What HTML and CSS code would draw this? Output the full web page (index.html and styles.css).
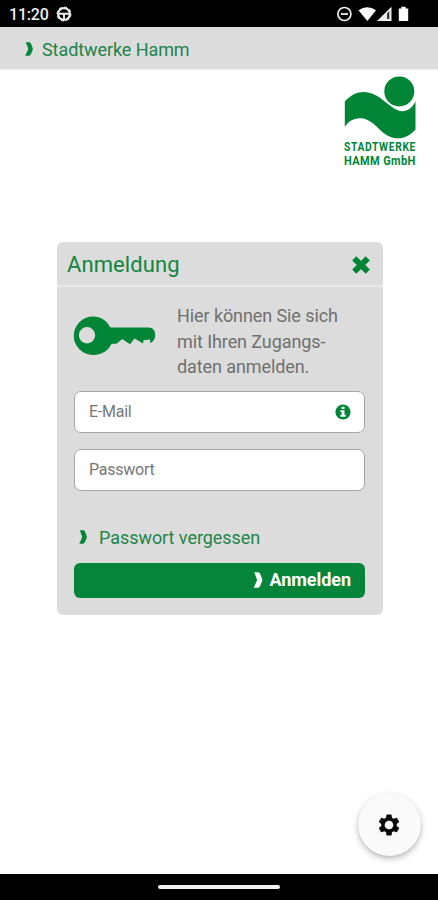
FILE: index.html
```html
<!DOCTYPE html>
<html lang="de">
<head>
<meta charset="utf-8">
<meta name="viewport" content="width=device-width, initial-scale=1">
<title>Stadtwerke Hamm</title>
<link rel="stylesheet" href="styles.css">
</head>
<body>
<svg width="0" height="0" class="defs" aria-hidden="true">
  <symbol id="chevron" viewBox="0 0 8 14"><path d="M.8.2H4Q5.3.2 5.9 1.6L7.6 5.8Q8 7 7.6 8.2L5.9 12.1Q5.2 13.8 3.9 13.8H.2L2.8 8.2Q3.3 7 2.9 5.8Z"/></symbol>
</svg>
<div class="screen">
  <div class="status">
    <span class="clock">11:20</span>
    <svg class="wheel" viewBox="0 0 16 16" fill="none" stroke="#eee">
      <circle cx="8" cy="8" r="5.9" stroke-width="2.2"/>
      <circle cx="8" cy="8" r="7" stroke-width="1" stroke-dasharray="3 2.5"/>
      <path d="M2.5 7.7h11M8 8v5.5" stroke-width="1.9"/>
    </svg>
    <svg class="signals" viewBox="0 0 74 18">
      <circle cx="8.4" cy="9" r="6.5" fill="none" stroke="#eee" stroke-width="1.7"/>
      <path d="M4.8 9h7.2" stroke="#eee" stroke-width="1.8"/>
      <path d="M22.5 5.2Q31 -.8 40 5.2L31.4 16Z" fill="#fff"/>
      <path d="M41 16L55.5 1.7V16Z" fill="#eee"/>
      <path d="M51 8.5l2.3-2.3V14h-2.3Z" fill="#333"/>
      <path d="M62.8 3.4h2.5V1.8h4.4v1.6h2.5V16h-9.4Z" fill="#fff"/>
    </svg>
  </div>
  <header class="bar">
    <svg class="chev"><use href="#chevron"/></svg>
    <span>Stadtwerke Hamm</span>
  </header>
  <main>
    <svg class="logo" viewBox="0 0 74 92">
      <circle cx="56.3" cy="16.4" r="15" />
      <path d="M1.8 26.5C12 14.5 26 14 38 23.5C50 33 54 36.5 60 36.2C66 35.8 70 31.5 72.5 26.5V54.5C66 62 58 65 49 62.5C36 58.5 32 44.5 18 43.3C10 43 5 47 1.8 52Z"/>
      <text transform="translate(1 76.2) scale(.86 1)" textLength="83">STADTWERKE</text>
      <text transform="translate(1 89.6) scale(.92 1)" textLength="77.6">HAMM GmbH</text>
    </svg>
    <section class="card">
      <div class="head">
        <h1>Anmeldung</h1>
        <svg class="close" viewBox="0 0 20 20"><path d="M3.2 3.4L16.8 16.6M16.8 3.4L3.2 16.6"/></svg>
      </div>
      <div class="body">
        <div class="intro">
          <svg class="key" viewBox="0 0 84 42"><path fill-rule="evenodd" d="M20 1.5C28 1.5 34 5.8 37.4 12.6H75.5C80 12.6 82.2 16 82.2 20C82.2 23.8 80.4 27 77.2 28V24.5L70.5 25.2L70 28.6L61.6 23.5L57 29.2L49.2 24L43.5 28.8H38.5C35.4 36 28.5 40 20 40A19.25 19.25 0 0 1 20 1.5ZM14 12A8.2 8.2 0 1 0 14 28.4A8.2 8.2 0 1 0 14 12Z"/></svg>
          <p>Hier können Sie sich<br>mit Ihren Zugangs-<br>daten anmelden.</p>
        </div>
        <div class="field"><span class="mail">E-Mail</span>
          <svg class="info" viewBox="0 0 16 16"><circle cx="8" cy="8" r="7.6"/><path fill="#fff" d="M6.6 2.7h2.9v2.3H6.6ZM5.4 6.2h4.1v4.6h1.2v1.9H5.4v-1.9h1.2V8.1H5.4Z"/></svg>
        </div>
        <div class="field"><span class="pass">Passwort</span></div>
        <div class="forgot"><svg class="chev"><use href="#chevron"/></svg><span>Passwort vergessen</span></div>
        <div class="submit"><svg class="chev"><use href="#chevron"/></svg><span>Anmelden</span></div>
      </div>
    </section>
    <div class="fab">
      <svg viewBox="0 0 24 24"><path d="M19.14 12.94c.04-.3.06-.61.06-.94s-.02-.64-.07-.94l2.03-1.58a.49.49 0 0 0 .12-.61l-1.92-3.32a.49.49 0 0 0-.59-.22l-2.39.96a7 7 0 0 0-1.62-.94l-.36-2.54a.48.48 0 0 0-.48-.41h-3.84a.48.48 0 0 0-.47.41l-.36 2.54a7.4 7.4 0 0 0-1.62.94l-2.39-.96a.48.48 0 0 0-.59.22L2.74 8.87a.48.48 0 0 0 .12.61l2.03 1.58a6 6 0 0 0 0 1.88l-2.03 1.58a.49.49 0 0 0-.12.61l1.92 3.32c.12.22.37.29.59.22l2.39-.96c.5.38 1.03.7 1.62.94l.36 2.54c.05.24.24.41.48.41h3.84c.24 0 .44-.17.47-.41l.36-2.54a7.4 7.4 0 0 0 1.62-.94l2.39.96c.22.08.47 0 .59-.22l1.92-3.32a.48.48 0 0 0-.12-.61ZM12 16a4 4 0 1 1 0-8 4 4 0 0 1 0 8Z"/></svg>
    </div>
  </main>
  <div class="nav"><i></i></div>
</div>
</body>
</html>
```
FILE: styles.css
```css
* { box-sizing: border-box; }
body { margin: 0; font-family: Roboto, "Liberation Sans", sans-serif; background: #fff; }
svg { display: block; flex: none; }
.defs { position: absolute; }
.screen { width: 438px; height: 900px; display: flex; flex-direction: column; overflow: hidden; }
.status { height: 27px; flex: none; background: #000; color: #eee; display: flex; align-items: center; padding: 1px 28px 0 9px; }
.clock { font-size: 16px; font-weight: 500; line-height: 20px; padding-top: 1px; width: 47px; white-space: nowrap; letter-spacing: -.2px; }
.wheel { width: 16px; height: 16px; }
.signals { width: 74px; height: 18px; margin-left: auto; }
.bar { height: 42px; flex: none; background: #dcdcdc; box-shadow: 0 1px 1px #eee; display: flex; align-items: center; padding: 3px 0 0 25px; color: #218449; font-size: 18px; letter-spacing: -.08px; }
.chev { width: 8px; height: 14px; fill: #008537; }
.bar .chev { margin: 0 9px 2px 0; }
main { flex: 1; position: relative; display: flex; flex-direction: column; }
.logo { width: 74px; height: 92px; margin: 6px 0 0 343px; fill: #008537; }
.logo text { font: 700 12px Roboto, sans-serif; }
.card { width: 326px; height: 373px; margin: 75px 0 0 57px; background: #dcdcdc; border-radius: 6px; }
.head { height: 45px; border-bottom: 2px solid #e9e9e9; display: flex; align-items: center; justify-content: space-between; padding: 2px 12px 0 10px; }
h1 { margin: 0; font-size: 22px; font-weight: 400; color: #118640; letter-spacing: .08px; }
.close { width: 20px; height: 20px; stroke: #008537; stroke-width: 5.8; }
.body { padding: 16px 18px 0 17px; display: flex; flex-direction: column; }
.intro { display: flex; height: 88px; }
.key { width: 84px; height: 42px; margin: 12px 20px 0 -1px; fill: #008537; }
.intro p { margin: 0; font-size: 18px; line-height: 25.5px; letter-spacing: -.09px; color: #707070; white-space: nowrap; }
.field { height: 42px; border: 1px solid #a5a5a5; border-radius: 7px; background: #fff; margin-bottom: 16px; display: flex; align-items: center; justify-content: space-between; padding: 0 13px 2px 14px; font-size: 16px; letter-spacing: -.25px; color: #777; }
.info { width: 16px; height: 16px; margin-top: 1px; fill: #008537; }
.forgot { margin: 12px 0 8px; height: 36px; display: flex; align-items: center; padding: 0 0 0 5px; font-size: 18px; letter-spacing: -.05px; color: #218449; }
.forgot .chev { margin: 0 12px 0 0; }
.submit { height: 35px; background: #048539; border-radius: 6px; display: flex; align-items: center; justify-content: flex-end; padding: 0 14px 2px 0; color: #fff; font-size: 18px; letter-spacing: -.05px; font-weight: 700; }
.submit .chev { fill: #fff; width: 10px; height: 16px; margin-right: 6px; }
.fab { position: absolute; right: 17px; bottom: 18px; width: 63px; height: 63px; border-radius: 50%; background: #fafafa; box-shadow: 0 3px 6px rgba(0,0,0,.24), 0 1px 3px rgba(0,0,0,.08); display: flex; align-items: center; justify-content: center; }
.fab svg { width: 26px; height: 26px; margin-right: 2px; fill: #0c0c0c; }
.nav { height: 26px; flex: none; background: #000; display: flex; align-items: center; justify-content: center; }
.nav i { width: 122px; height: 4px; border-radius: 2px; background: #f2f2f2; }
```
